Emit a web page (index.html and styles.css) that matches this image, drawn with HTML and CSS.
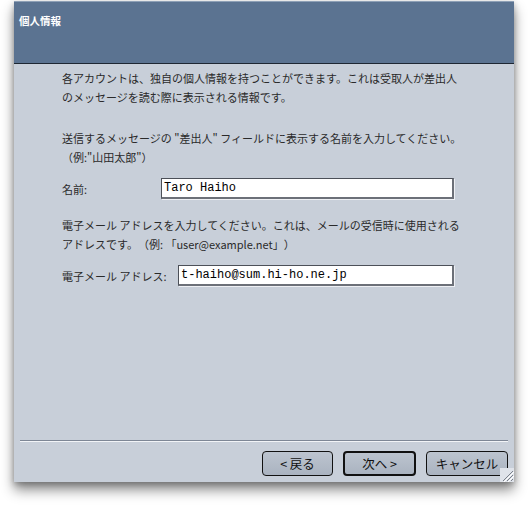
FILE: index.html
```html
<!DOCTYPE html>
<html lang="ja">
<head>
<meta charset="utf-8">
<link rel="stylesheet" href="styles.css">
</head>
<body>
<div class="window">
  <div class="header">
    <div class="title">個人情報</div>
  </div>
  <div class="content">
    <p class="para p1">各アカウントは、独自の個人情報を持つことができます。これは受取人が差出人<br>のメッセージを読む際に表示される情報です。</p>
    <p class="para p2">送信するメッセージの "差出人" フィールドに表示する名前を入力してください。<br>（例:"山田太郎"）</p>
    <div class="row row-name">
      <label class="label">名前:</label>
      <div class="field field-name">Taro Haiho</div>
    </div>
    <p class="para p3">電子メール アドレスを入力してください。これは、メールの受信時に使用される<br>アドレスです。（例: 「user@example.net」）</p>
    <div class="row row-mail">
      <label class="label">電子メール アドレス:</label>
      <div class="field field-mail">t-haiho@sum.hi-ho.ne.jp</div>
    </div>
  </div>
  <div class="separator"></div>
  <div class="footer">
    <button class="btn btn-back">&lt; 戻る</button>
    <button class="btn btn-next">次へ &gt;</button>
    <button class="btn btn-cancel">キャンセル</button>
  </div>
  <svg class="grip" width="14" height="14" viewBox="0 0 14 14">
    <line x1="13" y1="3" x2="3" y2="13" stroke="#7a808a" stroke-width="1"/>
    <line x1="13" y1="7" x2="7" y2="13" stroke="#7a808a" stroke-width="1"/>
    <line x1="13" y1="11" x2="11" y2="13" stroke="#7a808a" stroke-width="1"/>
    <line x1="14" y1="4" x2="4" y2="14" stroke="#ffffff" stroke-width="1"/>
    <line x1="14" y1="8" x2="8" y2="14" stroke="#ffffff" stroke-width="1"/>
  </svg>
</div>
</body>
</html>
```
FILE: styles.css
```css
html, body {
  margin: 0;
  padding: 0;
  background: #ffffff;
  width: 528px;
  height: 505px;
  overflow: hidden;
}
body {
  padding-top: 1px;
  padding-left: 14px;
  font-family: "Noto Sans CJK JP", "Noto Sans", sans-serif;
}
.window {
  position: relative;
  width: 500px;
  height: 481px;
  background: #c8cfd9;
  display: flex;
  flex-direction: column;
  box-shadow: 0 8px 12px rgba(0,0,0,0.45), 0 2px 6px rgba(0,0,0,0.25);
}
.header {
  height: 61px;
  background: #5b7391;
  border-top: 1px solid #8ea0b6;
  border-bottom: 1px solid #1e2733;
  box-sizing: content-box;
}
.title {
  color: #ffffff;
  font-weight: bold;
  font-size: 10.5px;
  line-height: 14px;
  padding: 12px 0 0 5px;
}
.content {
  flex: 1;
  padding: 5px 0 0 48px;
  color: #2a2a2a;
  font-size: 11px;
}
.para {
  margin: 0;
  line-height: 19px;
  white-space: nowrap;
  text-spacing-trim: space-all;
}
.p2 { margin-top: 22px; }
.p3 { margin-top: 17px; }
.row {
  display: flex;
  align-items: center;
  margin-top: 11px;
  height: 21px;
}
.label {
  font-size: 11px;
}
.row-name .label { width: 99px; }
.row-mail .label { width: 116px; white-space: nowrap; }
.field {
  height: 21px;
  box-sizing: border-box;
  background: #ffffff;
  border: 1px solid #4c5058;
  border-right-width: 2px;
  border-bottom-width: 2px;
  border-right-color: #6c7078;
  border-bottom-color: #6c7078;
  box-shadow: 1px 1px 0 #eef0f4;
  font-family: "Liberation Mono", "DejaVu Sans Mono", monospace;
  font-size: 12px;
  line-height: 18px;
  padding-left: 2px;
  color: #000;
  white-space: nowrap;
}
.field-name { width: 293px; }
.field-mail { width: 276px; }
.separator {
  margin: 0 6px;
  height: 1px;
  background: #7e8796;
  border-bottom: 1px solid #f2f4f7;
}
.footer {
  height: 40px;
  display: flex;
  justify-content: flex-end;
  align-items: flex-start;
  gap: 10px;
  padding: 9px 6px 0 0;
  box-sizing: border-box;
}
.btn {
  height: 25px;
  box-sizing: border-box;
  border: 1px solid #111111;
  border-radius: 4px;
  background: linear-gradient(#bcc4cf, #aab3c0);
  font-family: "Noto Sans CJK JP", sans-serif;
  font-size: 12.5px;
  line-height: 20px;
  color: #111;
  padding: 0;
  text-align: center;
}
.btn-back { width: 71px; }
.btn-next { width: 73px; border-width: 2px; }
.btn-cancel { width: 82px; }
.grip {
  position: absolute;
  right: 0;
  bottom: 0;
  background: #dfe3ea;
}
```
